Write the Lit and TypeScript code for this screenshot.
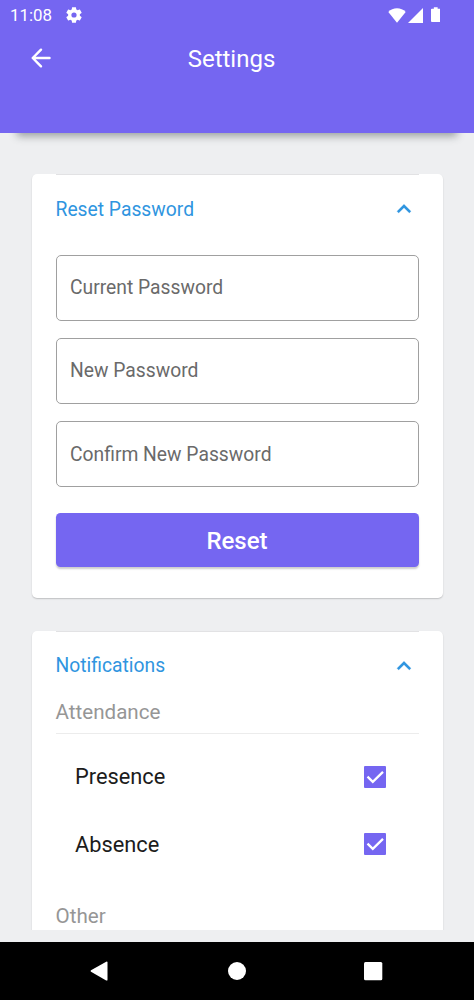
import { LitElement, html, css } from "lit";
import { customElement, property } from "lit/decorators.js";

@customElement("status-bar")
class StatusBar extends LitElement {
  static styles = css`
    :host { display: flex; align-items: center; box-sizing: border-box; height: 30px; padding: 0 34px 0 10px; color: #fff; }
    .time { font-size: 16.900px; line-height: 30px; width: 54.500px; white-space: nowrap; }
    .gear { width: 18px; height: 18px; }
    .spacer { flex: 1; }
    .wifi { width: 18px; height: 15px; }
    .signal { width: 15px; height: 15px; margin-left: 2px; }
    .battery { width: 9.500px; height: 15.500px; margin-left: 8px; }
    svg { display: block; flex: none; fill: currentColor; }
  `;
  render() {
    return html`
      <span class="time">11:08</span>
      <svg class="gear" viewBox="1 1 22 22"><path d="M19.14 12.94c.04-.3.06-.61.06-.94 0-.32-.02-.64-.07-.94l2.03-1.58c.18-.14.23-.41.12-.61l-1.92-3.32c-.12-.22-.37-.29-.59-.22l-2.39.96c-.5-.38-1.03-.7-1.62-.94l-.36-2.54c-.04-.24-.24-.41-.48-.41h-3.84c-.24 0-.43.17-.47.41l-.36 2.54c-.59.24-1.13.57-1.62.94l-2.39-.96c-.22-.08-.47 0-.59.22L2.74 8.87c-.12.21-.08.47.12.61l2.03 1.58c-.05.3-.09.63-.09.94s.02.64.07.94l-2.03 1.58c-.18.14-.23.41-.12.61l1.92 3.32c.12.22.37.29.59.22l2.39-.96c.5.38 1.03.7 1.62.94l.36 2.54c.05.24.24.41.48.41h3.84c.24 0 .44-.17.47-.41l.36-2.54c.59-.24 1.13-.56 1.62-.94l2.39.96c.22.08.47 0 .59-.22l1.92-3.32c.12-.22.07-.47-.12-.61l-2.01-1.58zM12 15.2a3.2 3.2 0 1 1 0-6.4 3.2 3.2 0 0 1 0 6.4z"/></svg>
      <span class="spacer"></span>
      <svg class="wifi" viewBox="0 0 18 15"><path d="M.3 4C2.6 1.6 5.7.3 9 .3s6.400 1.300 8.700 3.700L9 14.800z"/></svg>
      <svg class="signal" viewBox="0 0 15 15"><path d="M15 0v15H0z"/></svg>
      <svg class="battery" viewBox="0 0 10 16"><path d="M3 0h4v1.600h2q1 0 1 1v12q0 1-1 1H1q-1 0-1-1v-12q0-1 1-1h2z"/></svg>
    `;
  }
}

@customElement("settings-card")
class SettingsCard extends LitElement {
  @property() heading = "";
  static styles = css`
    :host { display: block; background: #fff; border-radius: 5px; box-shadow: 0 1px 1.500px rgba(0, 0, 0, 0.2); padding: 0 24px; box-sizing: border-box; }
    .rule { height: 1px; background: #e2e2e4; }
    .head { display: flex; align-items: center; justify-content: space-between; height: 68px; padding-right: 0.500px; color: #2f95e0; font-size: 19.300px; }
    svg { display: block; width: 28px; height: 28px; fill: currentColor; stroke: currentColor; stroke-width: 0.200px; }
  `;
  render() {
    return html`
      <div class="rule"></div>
      <div class="head">
        <span>${this.heading}</span>
        <svg viewBox="0 0 24 24"><path d="M12 8l-6 6 1.410 1.410L12 10.830l4.590 4.580L18 14z"/></svg>
      </div>
      <slot></slot>
    `;
  }
}

@customElement("app-root")
class AppRoot extends LitElement {
  static styles = css`
    :host { display: flex; flex-direction: column; height: 1000px; width: 474px; overflow: hidden; background: #eeeff1; font-family: Roboto, sans-serif; }
    .header { flex: none; height: 132.500px; background: #7566f1; color: #fff; box-shadow: 0 20px 8px -17px rgba(30, 45, 45, 0.42); }
    .bar { display: grid; grid-template-columns: 82px 1fr 93px; align-items: center; height: 56px; }
    .back { display: block; width: 28px; height: 28px; margin-left: 27px; }
    .title { text-align: center; font-size: 24px; line-height: 30px; padding-top: 2px; }
    .body { flex: none; height: 756px; margin-top: 41.500px; padding: 0 31.500px; overflow: hidden; }
    .reset { height: 423.500px; }
    .notes { margin-top: 33px; height: 330px; }
    .field { display: flex; align-items: center; box-sizing: border-box; height: 66.500px; padding: 0 13.500px; margin-bottom: 16.700px; border: 1.200px solid #a0a0a0; border-radius: 5px; color: #6a6a6a; font-size: 19.300px; }
    .fields { padding-top: 11.500px; }
    .button { display: flex; align-items: center; justify-content: center; box-sizing: border-box; height: 54px; padding-top: 2px; margin-top: 25.500px; border-radius: 4.500px; background: #7566f1; color: #fff; font-size: 24px; font-weight: 500; box-shadow: 0 2px 2px rgba(0, 0, 0, 0.2); }
    .group { display: flex; align-items: center; box-sizing: border-box; height: 34.500px; color: #969696; font-size: 20.600px; }
    .first { padding-bottom: 8px; border-bottom: 1px solid #ececec; }
    .row { display: flex; align-items: center; justify-content: space-between; height: 67.500px; padding: 0 33px 0 19.500px; font-size: 21.800px; color: #1c1c1c; }
    .rows { padding-top: 9px; }
    .check { display: block; width: 22px; height: 22px; }
    .other { margin-top: 21px; }
    .nav { flex: none; display: flex; align-items: center; height: 58px; margin-top: 12px; background: #000; }
    .nav svg { display: block; width: 20px; height: 20px; fill: #fff; }
    .navback { margin-left: 89px; }
    .home { margin-left: 118px; }
    .recent { margin-left: 116px; }
  `;

  render() {
    const labels = ["Current Password", "New Password", "Confirm New Password"];
    return html`
      <div class="header">
        <status-bar></status-bar>
        <div class="bar">
          <svg class="back" viewBox="0 0 24 24" fill="none" stroke="#fff" stroke-width="2.100" stroke-linecap="round" stroke-linejoin="round"><path d="M19.300 12H5M12 4.900L4.900 12l7.100 7.100"/></svg>
          <div class="title">Settings</div>
        </div>
      </div>
      <div class="body">
        <settings-card class="reset" heading="Reset Password">
          <div class="fields">${labels.map((l) => html`<div class="field">${l}</div>`)}</div>
          <div class="button">Reset</div>
        </settings-card>
        <settings-card class="notes" heading="Notifications">
          <div class="group first">Attendance</div>
          <div class="rows">
            ${["Presence", "Absence"].map((l) => html`
              <div class="row">
                <span>${l}</span>
                <svg class="check" viewBox="0 0 22 22"><rect width="22" height="22" rx="1" fill="#7566f1"/><path d="M3.500 10.600l5.300 5.200L19 5.900" fill="none" stroke="#fff" stroke-width="2.300"/></svg>
              </div>`)}
          </div>
          <div class="group other">Other</div>
        </settings-card>
      </div>
      <div class="nav">
        <svg class="navback" viewBox="0 0 20 20"><path d="M2 9.300L17.200.7q1.300-.5 1.300.7v17.300q0 1.200-1.300.7L2 10.700q-1-.7 0-1.400z"/></svg>
        <svg class="home" viewBox="0 0 20 20"><circle cx="10" cy="10" r="9"/></svg>
        <svg class="recent" viewBox="0 0 20 20"><rect x="1" y="1" width="18.300" height="18.300" rx="1.500"/></svg>
      </div>
    `;
  }
}
